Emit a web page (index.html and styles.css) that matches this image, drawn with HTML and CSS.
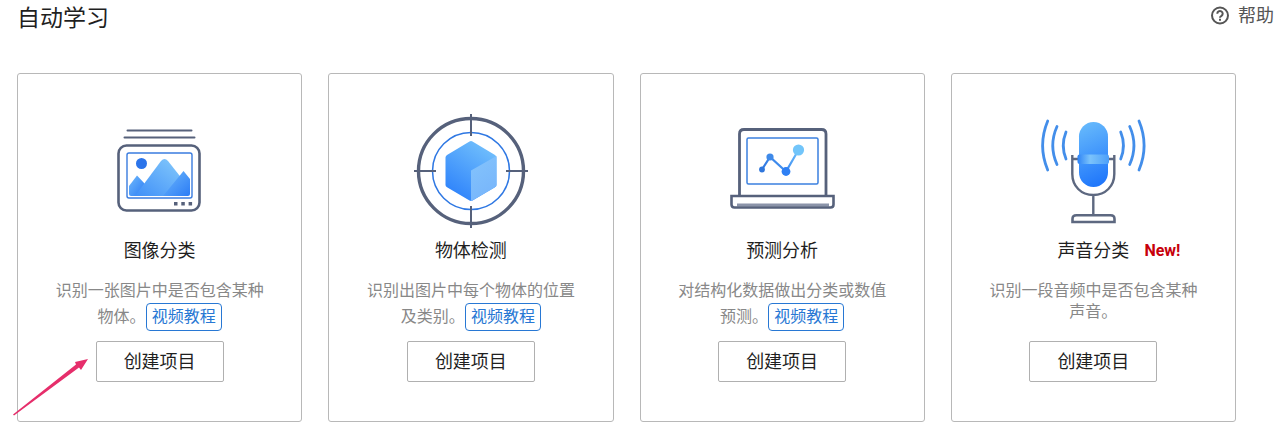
FILE: index.html
```html
<!DOCTYPE html>
<html lang="zh-CN">
<head>
    <meta charset="UTF-8">
    <meta name="viewport" content="width=device-width, initial-scale=1.0">
    <title>自动学习</title>
    <link rel="stylesheet" href="styles.css">
</head>
<body>
    <header class="page-header">
        <h1>自动学习</h1>
        <a class="help" href="#help">
            <svg width="20" height="20" viewBox="0 0 20 20" fill="none" stroke="#555" stroke-width="2">
                <circle cx="10" cy="9.500" r="8"/>
                <path d="M7.300 7.700a2.700 2.700 0 1 1 4.200 2.200c-1 .6-1.500 1-1.500 1.800"/>
                <path d="M10 12.700v2"/>
            </svg>
            <span>帮助</span>
        </a>
    </header>

    <main class="cards">
        <section class="card">
            <svg class="card-icon" viewBox="0 0 120 120" fill="none">
                <defs>
                    <linearGradient id="hill" x1="1" y1="0" x2="0" y2="1">
                        <stop offset="0" stop-color="#86cbfb"/>
                        <stop offset="1" stop-color="#3f8ff8"/>
                    </linearGradient>
                    <linearGradient id="hillDark" x1="0" y1="0" x2="1" y2="1">
                        <stop offset="0" stop-color="#6fb9fb"/>
                        <stop offset="1" stop-color="#2b7cf6"/>
                    </linearGradient>
                </defs>
                <g stroke="#56617b" stroke-linecap="round">
                    <path d="M27.500 20.500H91.500M24.500 27.500H94.500" stroke-width="2"/>
                    <rect x="18.500" y="35.500" width="81" height="65" rx="8" stroke-width="2.600"/>
                </g>
                <path d="M29 76L37 65.500L45 74L36 86H31Q29 86 29 84Z" fill="url(#hillDark)"/>
                <path d="M35 86L61 51Q64.500 47 68 51L83 70L74 86Z" fill="url(#hill)"/>
                <path d="M63 86L83.500 61L90 69V84Q90 86 88 86Z" fill="url(#hillDark)"/>
                <rect x="27" y="43" width="65" height="45" rx="2" stroke="#3a7cdf" stroke-width="1.400"/>
                <circle cx="41.500" cy="53.500" r="5.500" fill="#2b74ea"/>
                <path d="M74 92h3.500v3.500H74zM81.300 92h3.500v3.500h-3.500zM88.600 92h3.500v3.500h-3.500z" fill="#56617b"/>
            </svg>
            <h2>图像分类</h2>
            <p>识别一张图片中是否包含某种物体。<a href="#video">视频教程</a></p>
            <button type="button">创建项目</button>
            <svg class="arrow" width="76" height="57" viewBox="0 0 76 57" fill="#e62e6b">
                <path d="M0 55.500L63 5.500L62 3L75 0L68 11L66 8.500L1 56.500Z"/>
            </svg>
        </section>

        <section class="card">
            <svg class="card-icon" viewBox="0 0 120 120" fill="none">
                <defs>
                    <linearGradient id="cube" x1="0.800" y1="0" x2="0.200" y2="1">
                        <stop offset="0" stop-color="#74c2fc"/>
                        <stop offset="1" stop-color="#2b80fb"/>
                    </linearGradient>
                    <linearGradient id="cubeSide" x1="0" y1="0" x2="0.400" y2="1">
                        <stop offset="0" stop-color="#84c4fc"/>
                        <stop offset="1" stop-color="#78b6fb"/>
                    </linearGradient>
                </defs>
                <circle cx="60" cy="61" r="52.500" stroke="#56617b" stroke-width="3.400"/>
                <circle cx="60" cy="61" r="38.500" stroke="#2f78e3" stroke-width="1.500"/>
                <path d="M60 4v22M60 96v22M3 61h22M95 61h22" stroke="#56617b" stroke-width="2"/>
                <path d="M58.500 31.500Q60 30.700 61.500 31.500L84 45Q85.500 46 85.500 47.500V75Q85.500 76.500 84 77.300L61.500 90.500Q60 91.300 58.500 90.500L36 77.300Q34.500 76.500 34.500 75V47.500Q34.500 46 36 45Z" fill="url(#cube)"/>
                <path d="M60 60.500L85.500 46V75Q85.500 76.500 84 77.300L61.500 90.500L60 91Z" fill="url(#cubeSide)"/>
            </svg>
            <h2>物体检测</h2>
            <p>识别出图片中每个物体的位置及类别。<a href="#video">视频教程</a></p>
            <button type="button">创建项目</button>
        </section>

        <section class="card">
            <svg class="card-icon" viewBox="0 0 120 120" fill="none">
                <defs>
                    <linearGradient id="trend" gradientUnits="userSpaceOnUse" x1="40" y1="60" x2="77" y2="40">
                        <stop offset="0" stop-color="#2f76e0"/>
                        <stop offset="0.600" stop-color="#4695f3"/>
                        <stop offset="1" stop-color="#72c2fa"/>
                    </linearGradient>
                </defs>
                <path d="M17.500 86V24q0-4.500 4.500-4.500h77.500q4.500 0 4.500 4.500v62" stroke="#56617b" stroke-width="2.800"/>
                <rect x="25" y="28" width="71" height="46" rx="1.500" stroke="#3b80df" stroke-width="1.500"/>
                <path d="M40 59.500L48 47L64 61.500L76.500 40" stroke="url(#trend)" stroke-width="2.200"/>
                <circle cx="40" cy="59.500" r="2.900" fill="#2f76dc"/>
                <circle cx="48" cy="47" r="3.600" fill="#3f8ae9"/>
                <circle cx="64" cy="61.500" r="4.400" fill="#2f80f4"/>
                <circle cx="76.500" cy="40" r="5.600" fill="#72c5fa"/>
                <path d="M15 95h92" stroke="#8b94a9" stroke-width="3"/>
                <path d="M9.500 86h102v8.500q0 3-3 3h-96q-3 0-3-3z" stroke="#56617b" stroke-width="2.600"/>
            </svg>
            <h2>预测分析</h2>
            <p>对结构化数据做出分类或数值预测。<a href="#video">视频教程</a></p>
            <button type="button">创建项目</button>
        </section>

        <section class="card">
            <svg class="card-icon" viewBox="0 0 120 120" fill="none">
                <defs>
                    <linearGradient id="mic" x1="0.300" y1="0" x2="0.500" y2="1">
                        <stop offset="0" stop-color="#66b9fc"/>
                        <stop offset="1" stop-color="#2077fb"/>
                    </linearGradient>
                    <linearGradient id="micBand" x1="0" y1="0" x2="1" y2="0">
                        <stop offset="0" stop-color="#2d83f6"/>
                        <stop offset="0.400" stop-color="#7bc3fb"/>
                        <stop offset="1" stop-color="#4c9ff9"/>
                    </linearGradient>
                </defs>
                <g stroke="#438eea" stroke-width="2.800" stroke-linecap="round">
                    <path d="M14.700 11Q4.500 35.500 14.700 60M24 16.500Q15.500 35.500 24 54.500M33 22Q27.500 35.500 33 49"/>
                    <path d="M106 11Q116.200 35.500 106 60M96.700 16.500Q105.200 35.500 96.700 54.500M87.700 22Q93.200 35.500 87.700 49"/>
                </g>
                <g stroke="#5d6880" stroke-width="2.400">
                    <path d="M39.300 45V64C39.300 76 48 85 60.300 85S81.300 76 81.300 64V45M39.300 49H46M75 49H81.300M60.300 85V105"/>
                    <path d="M39.500 112V109Q39.500 105.300 43.500 105.300H77.500Q81.500 105.300 81.500 109V112Z" stroke-width="2.600"/>
                </g>
                <rect x="46" y="12" width="29" height="65" rx="14.500" fill="url(#mic)"/>
                <rect x="44.500" y="44.500" width="31.500" height="9.500" rx="2" fill="url(#micBand)"/>
            </svg>
            <h2>声音分类<span class="badge">New!</span></h2>
            <p>识别一段音频中是否包含某种声音。</p>
            <button type="button">创建项目</button>
        </section>
    </main>
</body>
</html>
```
FILE: styles.css
```css
* {
    box-sizing: border-box;
}

body {
    margin: 0;
    background: #fff;
    color: #1f1f1f;
    font-family: Roboto, "Noto Sans CJK SC", sans-serif;
}

h1, h2, p {
    margin: 0;
    font-weight: 400;
}

.page-header {
    display: flex;
    justify-content: space-between;
    align-items: flex-start;
    padding: 0 6px 0 17px;
    margin-bottom: 35px;
}

h1 {
    font-size: 23px;
    line-height: 38px;
}

.help {
    display: flex;
    align-items: center;
    gap: 8px;
    color: #555;
    font-size: 18px;
    line-height: 32px;
    text-decoration: none;
}

.cards {
    display: grid;
    grid-template-columns: repeat(4, 1fr);
    gap: 26px;
    padding: 0 44px 0 17px;
}

.card {
    position: relative;
    display: flex;
    flex-direction: column;
    align-items: center;
    padding: 36px 16px 39px;
    border: 1px solid #b8b8b8;
    border-radius: 3px;
}

.card-icon {
    width: 120px;
    height: 120px;
}

h2 {
    position: relative;
    margin-bottom: 8px;
    font-size: 18px;
    line-height: 42px;
}

.badge {
    position: absolute;
    left: 100%;
    margin-left: 15px;
    color: #c7000b;
    font-size: 16px;
    font-weight: 700;
}

p {
    max-width: 208px;
    min-height: 61px;
    color: #888;
    font-size: 16px;
    line-height: 21px;
    text-align: center;
}

p a {
    display: inline-block;
    margin-top: 2px;
    padding: 0 5px;
    border: 1px solid #2878d4;
    border-radius: 4px;
    color: #2878d4;
    line-height: 26px;
    text-decoration: none;
}

button {
    padding: 0 27px;
    border: 1px solid #b0b0b0;
    border-radius: 2px;
    background: #fff;
    color: #1f1f1f;
    font-family: inherit;
    font-size: 18px;
    line-height: 39px;
    cursor: pointer;
}

.arrow {
    position: absolute;
    left: -5px;
    bottom: 5px;
}
```
